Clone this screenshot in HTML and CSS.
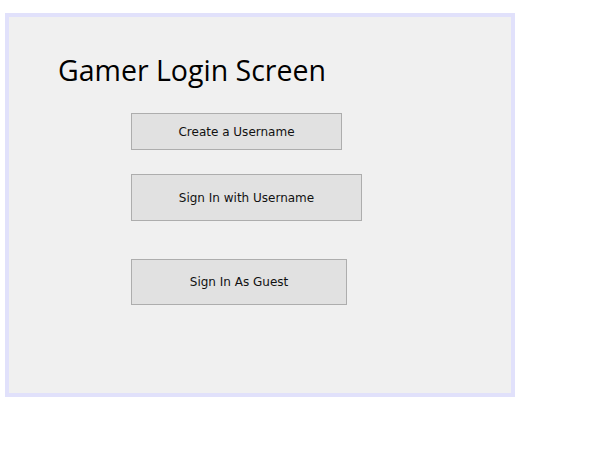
FILE: index.html
```html
<!DOCTYPE html>
<html>
<head>
<meta charset="utf-8">
<link rel="stylesheet" href="styles.css">
</head>
<body>
<div class="frame">
  <h1 class="title">Gamer Login Screen</h1>
  <div class="buttons">
    <button class="btn btn-create">Create a Username</button>
    <button class="btn btn-signin">Sign In with Username</button>
    <button class="btn btn-guest">Sign In As Guest</button>
  </div>
</div>
</body>
</html>
```
FILE: styles.css
```css
html, body {
  margin: 0;
  padding: 0;
  background: #ffffff;
}
body {
  padding: 13px 0 0 5px;
}
.frame {
  box-sizing: border-box;
  width: 510px;
  height: 384px;
  border: 4px solid #e1e1fb;
  background: #f0f0f0;
  padding: 0 0 0 49px;
  display: flex;
  flex-direction: column;
}
.title {
  margin: 35px 0 0 0;
  font-family: "Open Sans", "Noto Sans", sans-serif;
  font-weight: normal;
  font-size: 28.5px;
  line-height: 36px;
  color: #000;
}
.buttons {
  display: flex;
  flex-direction: column;
  align-items: flex-start;
  padding-left: 73px;
  margin-top: 25px;
}
.btn {
  box-sizing: border-box;
  border: 1px solid #adadad;
  background: #e1e1e1;
  font-family: "DejaVu Sans", sans-serif;
  font-size: 12px;
  color: #111;
  padding: 0;
  margin: 0;
}
.btn-create {
  width: 211px;
  height: 37px;
}
.btn-signin {
  width: 231px;
  height: 47px;
  margin-top: 24px;
}
.btn-guest {
  width: 216px;
  height: 46px;
  margin-top: 38px;
}
```
